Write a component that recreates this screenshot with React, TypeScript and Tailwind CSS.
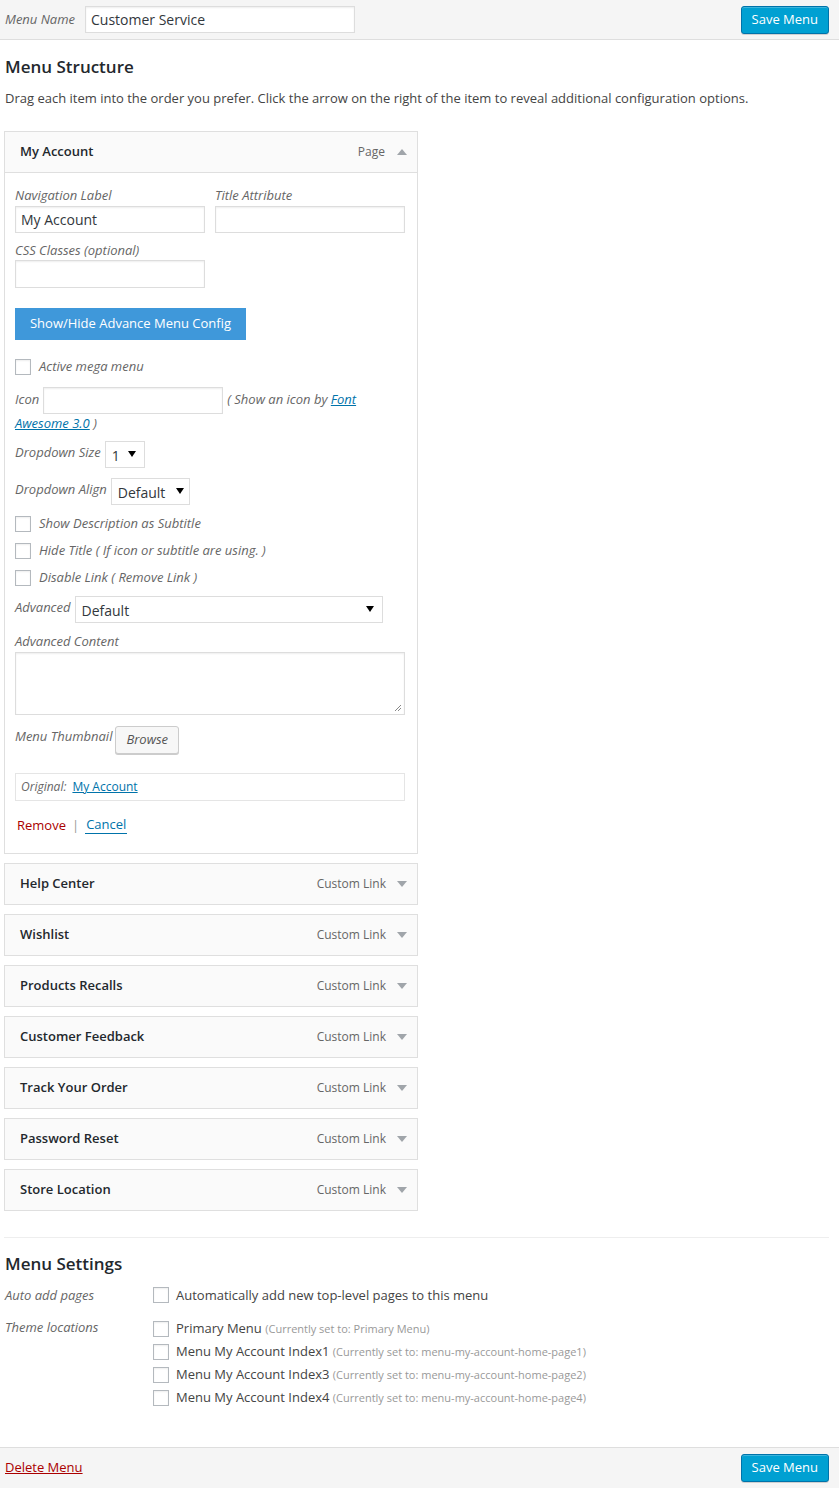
import React from 'react';

const FONT = { fontFamily: '"Open Sans", "Noto Sans", sans-serif' };

const ITEMS = [
  'Help Center',
  'Wishlist',
  'Products Recalls',
  'Customer Feedback',
  'Track Your Order',
  'Password Reset',
  'Store Location',
];

const LOCATIONS = [
  { name: 'Primary Menu', note: 'Primary Menu' },
  { name: 'Menu My Account Index1', note: 'menu-my-account-home-page1' },
  { name: 'Menu My Account Index3', note: 'menu-my-account-home-page2' },
  { name: 'Menu My Account Index4', note: 'menu-my-account-home-page4' },
];

function Arrow({ up }: { up?: boolean }) {
  return (
    <svg width="10" height="6" viewBox="0 0 10 6" className="fill-[#a0a5aa]">
      {up ? <path d="M0 6 L5 0 L10 6 Z" /> : <path d="M0 0 L10 0 L5 6 Z" />}
    </svg>
  );
}

function Caret() {
  return (
    <svg width="8" height="6" viewBox="0 0 8 6" className="fill-black">
      <path d="M0 0 L8 0 L4 6 Z" />
    </svg>
  );
}

function Check() {
  return <span className="block h-4 w-4 shrink-0 border border-[#b4b9be] bg-white shadow-[inset_0_1px_2px_rgba(0,0,0,0.07)]" />;
}

function Label({ children }: { children: React.ReactNode }) {
  return <span className="text-[13px] italic text-[#666]">{children}</span>;
}

function Box({ className = '', children }: { className?: string; children?: React.ReactNode }) {
  return (
    <div className={`border border-[#ddd] bg-white shadow-[inset_0_1px_2px_rgba(0,0,0,0.07)] ${className}`}>{children}</div>
  );
}

function SaveButton() {
  return (
    <button className="h-[28px] rounded-[3px] border border-[#0073aa] bg-[#00a0d2] px-[10px] text-[13px] text-white shadow-[inset_0_1px_0_rgba(120,200,230,0.5),0_1px_0_rgba(0,0,0,0.15)]">
      Save Menu
    </button>
  );
}

function CheckRow({ children }: { children: React.ReactNode }) {
  return (
    <div className="flex h-[27px] items-center gap-[8px]">
      <Check />
      <Label>{children}</Label>
    </div>
  );
}

export default function App() {
  return (
    <div className="min-h-[1489px] bg-white text-[13px] text-[#444]" style={FONT}>
      {/* top bar */}
      <div className="flex h-[40px] items-center justify-between border-b border-[#dedede] bg-[#f5f5f5] pl-[5px] pr-[10px]">
        <div className="flex items-center gap-[10px]">
          <Label>Menu Name</Label>
          <Box className="flex h-[27px] w-[270px] items-center px-[5px] text-[14px] text-[#32373c]">Customer Service</Box>
        </div>
        <SaveButton />
      </div>

      <div className="px-[4px]">
        <h2 className="mt-[16px] pl-[1px] text-[17px] font-semibold leading-[22px] text-[#23282d]">Menu Structure</h2>
        <p className="mt-[11px] pl-[1px] leading-[18px]">
          Drag each item into the order you prefer. Click the arrow on the right of the item to reveal additional configuration options.
        </p>

        <div className="mt-[24px] w-[414px]">
          {/* open item */}
          <div className="flex h-[42px] items-center justify-between border border-[#dfdfdf] bg-[#fafafa] pl-[15px] pr-[10px]">
            <span className="font-semibold text-[#23282d]">My Account</span>
            <div className="flex items-center gap-[12px] text-[#666]">
              <span className="text-[12px]">Page</span>
              <Arrow up />
            </div>
          </div>
          <div className="border border-t-0 border-[#dfdfdf] bg-white px-[10px] pb-[19px] pt-[13px]">
            <div className="flex gap-[10px]">
              <div className="flex w-[190px] flex-col">
                <Label>Navigation Label</Label>
                <Box className="flex h-[27px] items-center px-[5px] text-[14px] text-[#32373c]">My Account</Box>
              </div>
              <div className="flex w-[190px] flex-col">
                <Label>Title Attribute</Label>
                <Box className="h-[27px]" />
              </div>
            </div>
            <div className="mt-[8px] flex w-[190px] flex-col">
              <Label>CSS Classes (optional)</Label>
              <Box className="h-[28px]" />
            </div>

            <button className="mt-[20px] h-[32px] w-[231px] bg-[#3f98da] text-[13px] text-white">Show/Hide Advance Menu Config</button>

            <div className="mt-[17px] flex items-center gap-[8px]">
              <Check />
              <Label>Active mega menu</Label>
            </div>

            <div className="mt-[10px]">
              <div className="flex items-center gap-[4px]">
                <Label>Icon</Label>
                <Box className="h-[27px] w-[180px]" />
                <span className="text-[13px] italic text-[#666]">
                  ( Show an icon by <span className="text-[#0073aa] underline">Font</span>
                </span>
              </div>
              <div className="leading-[18px]">
                <span className="text-[13px] italic text-[#666]">
                  <span className="text-[#0073aa] underline">Awesome 3.0</span> )
                </span>
              </div>
            </div>

            <div className="mt-[9px] flex items-start gap-[4px]">
              <span className="pt-[2px]">
                <Label>Dropdown Size</Label>
              </span>
              <Box className="flex h-[27px] w-[40px] items-center justify-between pl-[6px] pr-[8px] text-[14px] text-[#32373c] shadow-none">
                <span className="pt-[3px]">1</span>
                <Caret />
              </Box>
            </div>

            <div className="mt-[10px] flex items-start gap-[4px]">
              <span className="pt-[2px]">
                <Label>Dropdown Align</Label>
              </span>
              <Box className="flex h-[27px] w-[79px] items-center justify-between pl-[6px] pr-[5px] text-[14px] text-[#32373c] shadow-none">
                <span className="pt-[2px]">Default</span>
                <Caret />
              </Box>
            </div>

            <div className="mt-[6px]">
              <CheckRow>Show Description as Subtitle</CheckRow>
              <CheckRow>Hide Title ( If icon or subtitle are using. )</CheckRow>
              <CheckRow>Disable Link ( Remove Link )</CheckRow>
            </div>

            <div className="mt-[4px] flex items-start gap-[4px]">
              <span className="pt-[2px]">
                <Label>Advanced</Label>
              </span>
              <Box className="flex h-[27px] w-[308px] items-center justify-between pl-[6px] pr-[8px] text-[14px] text-[#32373c] shadow-none">
                <span className="pt-[2px]">Default</span>
                <Caret />
              </Box>
            </div>

            <div className="mt-[9px] flex flex-col">
              <Label>Advanced Content</Label>
              <Box className="relative mt-[1px] h-[63px] w-[390px]">
                <svg width="8" height="8" viewBox="0 0 8 8" className="absolute bottom-[2px] right-[2px] stroke-[#888]">
                  <path d="M1 7 L7 1 M4 7 L7 4" strokeWidth="1" />
                </svg>
              </Box>
            </div>

            <div className="mt-[11px] flex items-start gap-[3px]">
              <span className="pt-[1px]">
                <Label>Menu Thumbnail</Label>
              </span>
              <button className="h-[28px] rounded-[3px] border border-[#ccc] bg-[#f7f7f7] px-[10px] text-[13px] italic text-[#555] shadow-[0_1px_0_#ccc]">
                Browse
              </button>
            </div>

            <div className="mt-[19px] flex h-[28px] w-[390px] items-center gap-[6px] border border-[#e5e5e5] px-[5px] text-[12px]">
              <span className="italic text-[#666]">Original:</span>
              <span className="text-[#0073aa] underline">My Account</span>
            </div>

            <div className="mt-[14px] flex items-center pl-[2px] leading-[18px]">
              <span className="text-[#a00]">Remove</span>
              <span className="mx-[6px] text-[#999]">|</span>
              <span className="border-b border-[#0073aa] px-[1px] text-[#0073aa]">Cancel</span>
            </div>
          </div>

          {/* collapsed items */}
          <div className="mt-[9px] flex flex-col gap-[9px]">
            {ITEMS.map((t) => (
              <div
                key={t}
                className="flex h-[42px] items-center justify-between border border-[#dfdfdf] bg-[#fafafa] pl-[15px] pr-[10px]"
              >
                <span className="font-semibold text-[#23282d]">{t}</span>
                <div className="flex items-center gap-[11px] text-[#666]">
                  <span className="text-[12px]">Custom Link</span>
                  <Arrow />
                </div>
              </div>
            ))}
          </div>
        </div>

        <div className="mt-[26px] w-[825px] border-t border-[#eee]" />

        <h2 className="mt-[15px] pl-[1px] text-[17px] font-semibold leading-[22px] text-[#23282d]">Menu Settings</h2>

        <div className="mt-[10px] flex pl-[1px]">
          <div className="w-[148px] pt-[1px]">
            <Label>Auto add pages</Label>
          </div>
          <div className="flex items-center gap-[7px]">
            <Check />
            <span>Automatically add new top-level pages to this menu</span>
          </div>
        </div>

        <div className="mt-[12px] flex pl-[1px]">
          <div className="w-[148px]">
            <Label>Theme locations</Label>
          </div>
          <div className="flex flex-col">
            {LOCATIONS.map((l) => (
              <div key={l.name} className="flex h-[23px] items-center gap-[7px]">
                <Check />
                <span>
                  {l.name} <span className="text-[11px] text-[#999]">(Currently set to: {l.note})</span>
                </span>
              </div>
            ))}
          </div>
        </div>
      </div>

      {/* footer */}
      <div className="mt-[37px] flex h-[41px] items-center justify-between border-t border-[#dedede] bg-[#f5f5f5] pl-[5px] pr-[10px]">
        <span className="text-[#a00] underline">Delete Menu</span>
        <SaveButton />
      </div>
    </div>
  );
}
